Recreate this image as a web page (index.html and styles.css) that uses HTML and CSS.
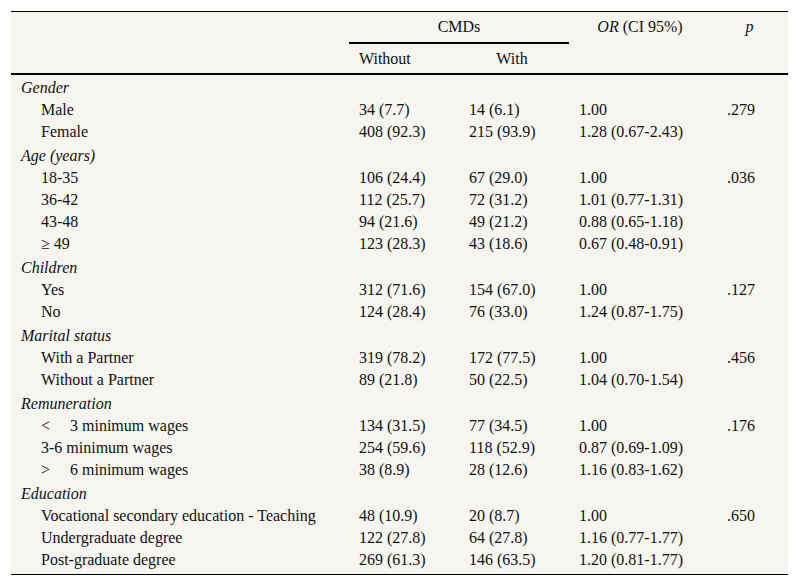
FILE: index.html
```html
<!DOCTYPE html>
<html lang="en">
<head>
<meta charset="utf-8">
<title>CMDs table</title>
<link rel="stylesheet" href="styles.css">
</head>
<body>
<div class="wrap">
<table class="tbl">
  <colgroup>
    <col class="c-label"><col class="c-num"><col class="c-num"><col class="c-or"><col class="c-p">
  </colgroup>
  <thead>
    <tr class="h1">
      <th></th>
      <th colspan="2" class="cmds">CMDs</th>
      <th class="or"><i>OR</i> (CI 95%)</th>
      <th class="p"><i>p</i></th>
    </tr>
    <tr class="h2">
      <th></th>
      <th class="without">Without</th>
      <th class="with">With</th>
      <th></th>
      <th></th>
    </tr>
  </thead>
  <tbody>
    <tr class="cat first"><td colspan="5">Gender</td></tr>
    <tr><td class="sub">Male</td><td>34 (7.7)</td><td>14 (6.1)</td><td>1.00</td><td>.279</td></tr>
    <tr><td class="sub">Female</td><td>408 (92.3)</td><td>215 (93.9)</td><td>1.28 (0.67-2.43)</td><td></td></tr>

    <tr class="cat"><td colspan="5">Age (years)</td></tr>
    <tr><td class="sub">18-35</td><td>106 (24.4)</td><td>67 (29.0)</td><td>1.00</td><td>.036</td></tr>
    <tr><td class="sub">36-42</td><td>112 (25.7)</td><td>72 (31.2)</td><td>1.01 (0.77-1.31)</td><td></td></tr>
    <tr><td class="sub">43-48</td><td>94 (21.6)</td><td>49 (21.2)</td><td>0.88 (0.65-1.18)</td><td></td></tr>
    <tr><td class="sub">≥ 49</td><td>123 (28.3)</td><td>43 (18.6)</td><td>0.67 (0.48-0.91)</td><td></td></tr>

    <tr class="cat"><td colspan="5">Children</td></tr>
    <tr><td class="sub">Yes</td><td>312 (71.6)</td><td>154 (67.0)</td><td>1.00</td><td>.127</td></tr>
    <tr><td class="sub">No</td><td>124 (28.4)</td><td>76 (33.0)</td><td>1.24 (0.87-1.75)</td><td></td></tr>

    <tr class="cat"><td colspan="5">Marital status</td></tr>
    <tr><td class="sub">With a Partner</td><td>319 (78.2)</td><td>172 (77.5)</td><td>1.00</td><td>.456</td></tr>
    <tr><td class="sub">Without a Partner</td><td>89 (21.8)</td><td>50 (22.5)</td><td>1.04 (0.70-1.54)</td><td></td></tr>

    <tr class="cat"><td colspan="5">Remuneration</td></tr>
    <tr><td class="sub"><span class="sym">&lt;</span>3 minimum wages</td><td>134 (31.5)</td><td>77 (34.5)</td><td>1.00</td><td>.176</td></tr>
    <tr><td class="sub">3-6 minimum wages</td><td>254 (59.6)</td><td>118 (52.9)</td><td>0.87 (0.69-1.09)</td><td></td></tr>
    <tr><td class="sub"><span class="sym">&gt;</span>6 minimum wages</td><td>38 (8.9)</td><td>28 (12.6)</td><td>1.16 (0.83-1.62)</td><td></td></tr>

    <tr class="cat"><td colspan="5">Education</td></tr>
    <tr><td class="sub">Vocational secondary education - Teaching</td><td>48 (10.9)</td><td>20 (8.7)</td><td>1.00</td><td>.650</td></tr>
    <tr><td class="sub">Undergraduate degree</td><td>122 (27.8)</td><td>64 (27.8)</td><td>1.16 (0.77-1.77)</td><td></td></tr>
    <tr class="last"><td class="sub">Post-graduate degree</td><td>269 (61.3)</td><td>146 (63.5)</td><td>1.20 (0.81-1.77)</td><td></td></tr>
  </tbody>
</table>
</div>
</body>
</html>
```

FILE: styles.css
```css
html, body {
  margin: 0;
  padding: 0;
  background: #ffffff;
}

.wrap {
  padding: 11px 11px 0 11px;
}

.tbl {
  width: 777px;
  border-collapse: separate;
  border-spacing: 0;
  table-layout: fixed;
  background: #f7f5f0;
  color: #111;
  font-family: "Liberation Serif", "Times New Roman", serif;
  font-size: 16px;
  border-top: 1px solid #000;
  border-bottom: 1px solid #000;
}

.c-label { width: 338px; }
.c-num { width: 110px; }
.c-or { width: 148px; }
.c-p { width: 71px; }

.tbl th,
.tbl td {
  padding: 0 0 0 10px;
  text-align: left;
  white-space: nowrap;
  font-weight: normal;
  vertical-align: top;
}

.h1 th {
  height: 30px;
  line-height: 30px;
  border-bottom: 2px solid transparent;
}

.h1 .cmds {
  text-align: center;
  padding-left: 0;
  border-bottom-color: #000;
}

.h1 .or {
  text-align: center;
  padding-left: 0;
  padding-right: 6px;
}

.h1 .p {
  text-align: center;
  padding-left: 0;
  padding-right: 6px;
}

.h2 th {
  height: 28px;
  padding-top: 1px;
  line-height: 28px;
  border-bottom: 2px solid #000;
}

.h2 .with {
  text-align: center;
  padding-left: 0;
  padding-right: 4px;
}

.tbl tbody td {
  height: 21px;
  padding-top: 1px;
  line-height: 21px;
}

.tbl tbody .cat td {
  font-style: italic;
  padding-top: 3px;
}

.tbl tbody .cat.first td {
  padding-top: 2px;
}

.tbl td.sub {
  padding-left: 30px;
}

.sym {
  display: inline-block;
  width: 29px;
}

.tbl tbody .last td {
  padding-bottom: 4px;
}
```
